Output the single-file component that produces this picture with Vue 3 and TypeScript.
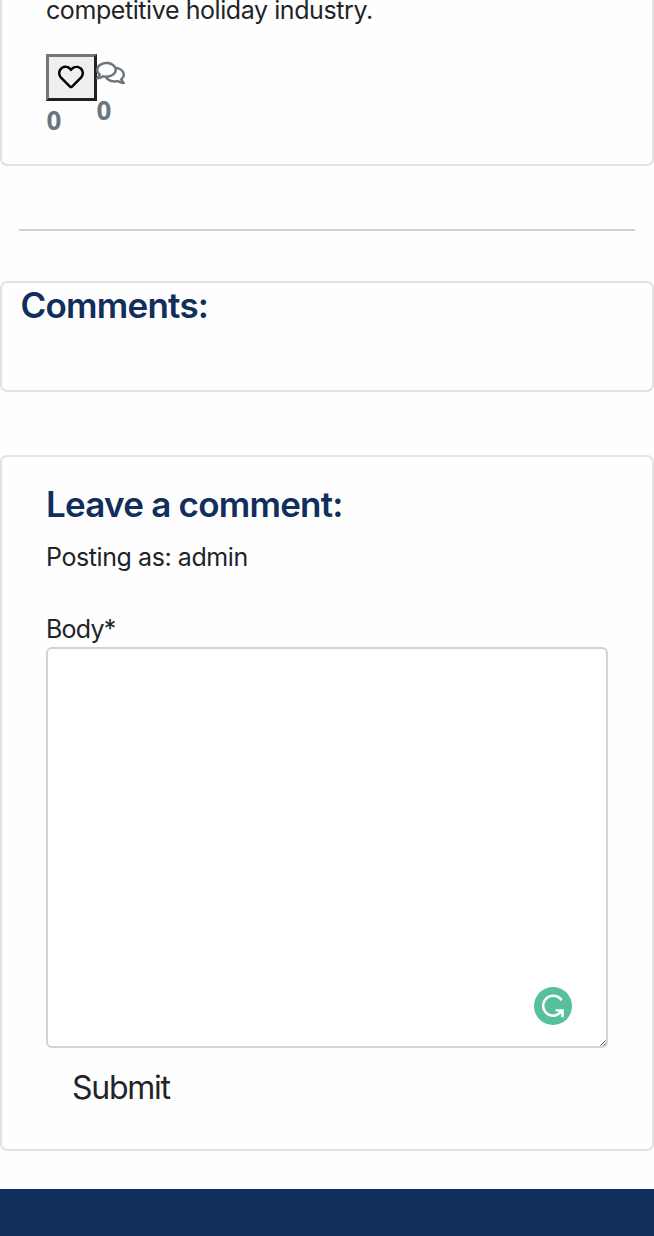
<script setup lang="ts">
import { ref } from 'vue'

const likes = ref<number>(0)
const replies = ref<number>(0)
const username = ref<string>('admin')
const body = ref<string>('')
</script>

<template>
  <main class="page">
    <section class="card post">
      <p class="excerpt">competitive holiday industry.</p>
      <div class="reactions">
        <div class="reaction">
          <button class="like" type="button" aria-label="Like">
            <svg viewBox="0 0 512 512" width="26" height="26" fill="currentColor">
              <path d="M458.4 64.3C400.6 15.7 311.3 23 256 79.3 200.7 23 111.4 15.6 53.6 64.3-21.6 127.6-10.6 230.8 43 285.5l175.4 178.7c10 10.2 23.4 15.9 37.6 15.9 14.3 0 27.6-5.6 37.6-15.8L469 285.6c53.5-54.7 64.7-157.9-10.6-221.3zm-23.6 187.5L259.4 430.5c-2.4 2.4-4.4 2.4-6.8 0L77.2 251.8c-36.5-37.2-43.9-107.6 7.3-150.7 38.9-32.7 98.9-27.8 136.5 10.5l35 35.7 35-35.7c37.8-38.5 97.8-43.2 136.5-10.6 51.1 43.1 43.5 113.9 7.3 150.8z" />
            </svg>
          </button>
          <span class="count">{{ likes }}</span>
        </div>
        <div class="reaction replies">
          <svg class="bubbles" viewBox="0 0 576 512" width="29" height="26" fill="currentColor">
            <path d="M532 386.2c27.5-27.1 44-61.1 44-98.2 0-80-76.5-146.1-176.2-157.9C368.3 72.5 294.3 32 208 32 93.1 32 0 103.6 0 192c0 37 16.5 71 44 98.2-15.3 30.7-37.3 54.5-37.7 54.9-6.3 6.7-8.1 16.5-4.4 25 3.6 8.5 12 14 21.2 14 53.5 0 96.7-20.2 125.2-38.8 9.2 2.1 18.7 3.7 28.4 4.9C208.1 407.6 281.8 448 368 448c20.8 0 40.8-2.4 59.8-6.8C456.3 459.7 499.4 480 553 480c9.2 0 17.5-5.5 21.2-14 3.6-8.5 1.9-18.3-4.4-25-.4-.3-22.5-24.1-37.8-54.8zm-392.8-92.3L122.1 305c-14.1 9.1-28.5 16.3-43.1 21.4 2.7-4.7 5.4-9.7 8-14.8l15.5-31.1L77.7 256C64.2 242.6 48 220.7 48 192c0-60.7 73.3-112 160-112s160 51.3 160 112-73.3 112-160 112c-16.5 0-33-1.9-49-5.6l-19.8-4.5zM498.3 352l-24.7 24.4 15.5 31.1c2.6 5.1 5.3 10.1 8 14.8-14.6-5.1-29-12.3-43.1-21.4l-17.1-11.1-19.9 4.6c-16 3.7-32.5 5.6-49 5.6-54 0-102.2-20.1-131.3-49.7C338 339.5 416 272.9 416 192c0-3.4-.4-6.7-.7-10C479.7 196.5 528 238.8 528 288c0 28.7-16.2 50.6-29.7 64z" />
          </svg>
          <span class="count">{{ replies }}</span>
        </div>
      </div>
    </section>

    <hr class="divider" />

    <section class="card comments">
      <h3 class="heading">Comments:</h3>
    </section>

    <section class="card compose">
      <h3 class="heading">Leave a comment:</h3>
      <p class="posting">Posting as: {{ username }}</p>
      <form @submit.prevent>
        <label class="label" for="body">Body*</label>
        <div class="field">
          <textarea id="body" v-model="body" class="textarea"></textarea>
          <svg class="assistant" viewBox="0 0 38 38" width="38" height="38">
            <circle cx="19" cy="19" r="19" fill="#57bf9c" />
            <path d="M27.6 13.2A10 10 0 1 0 19 28.7C22.4 28.7 25 27.2 27.4 24.4" fill="none" stroke="#fff" stroke-width="2.5" />
            <path d="M21.6 22.2H29.8V30.2H27.2V26.2L24.6 24.6H21.6z" fill="#fff" />
          </svg>
          <svg class="grip" viewBox="0 0 6 6" width="6" height="6">
            <path d="M.5 5.5L5.5.5M3.5 5.5L5.5 3.5" stroke="#555" stroke-width="1" />
          </svg>
        </div>
        <button class="submit" type="submit">Submit</button>
      </form>
    </section>

    <footer class="footer"></footer>
  </main>
</template>

<style>
body {
  margin: 0;
  background: #fefefe;
}
</style>

<style scoped>
.page {
  box-sizing: border-box;
  height: 1236px;
  overflow: hidden;
  display: flex;
  flex-direction: column;
  font-family: Inter, "Liberation Sans", sans-serif;
  font-size: 25px;
  color: #212529;
}
.card {
  box-sizing: border-box;
  flex: none;
  border: 2px solid #e2e2e2;
  border-radius: 7px;
  background: #fefefe;
}
.post {
  height: 166px;
  border-top: 0;
  border-radius: 0 0 7px 7px;
  padding: 0 44px;
}
.excerpt {
  margin: 0;
  height: 54px;
  line-height: 20px;
  letter-spacing: -0.42px;
  white-space: nowrap;
}
.reactions {
  display: flex;
  align-items: flex-start;
}
.reaction {
  display: flex;
  flex-direction: column;
}
.like {
  box-sizing: border-box;
  width: 51px;
  height: 47px;
  padding: 0 1px 1px 0;
  border: 3px solid;
  border-color: #767676 #212121 #212121 #767676;
  background: #efefef;
  color: #000;
  display: flex;
  align-items: center;
  justify-content: center;
}
.count {
  padding-left: 0.5px;
  line-height: 38px;
  font-family: "Open Sans", "Noto Sans", sans-serif;
  font-size: 26px;
  font-weight: 700;
  color: #6c757d;
}
.replies {
  color: #6c757d;
  margin-left: -1px;
  padding-top: 6px;
}
.bubbles {
  display: block;
  margin-left: -0.5px;
  margin-bottom: 5px;
}
.divider {
  flex: none;
  box-sizing: border-box;
  width: 616px;
  height: 2px;
  margin: 63px 19px 50px;
  border: 0;
  background: #d1d1d1;
}
.heading {
  margin: 0;
  font-weight: 600;
  color: #112e5c;
  font-size: 35px;
  line-height: 42px;
  letter-spacing: -0.77px;
  white-space: nowrap;
}
.comments {
  height: 111px;
  padding: 1px 18.5px;
}
.compose {
  height: 696px;
  margin-top: 63px;
  padding: 26px 44px 0;
}
.posting {
  margin: 0;
  padding-top: 13px;
  line-height: 38px;
  letter-spacing: -0.42px;
}
.label {
  display: block;
  margin-top: 34px;
  line-height: 38px;
  letter-spacing: -0.75px;
}
.field {
  position: relative;
  height: 401px;
  margin-top: -1px;
}
.textarea {
  box-sizing: border-box;
  display: block;
  width: 100%;
  height: 100%;
  padding: 10px 18px;
  border: 2px solid #ced4da;
  border-radius: 6px;
  background: #fff;
  font: inherit;
  color: inherit;
  resize: none;
  outline: 0;
}
.assistant {
  position: absolute;
  right: 36px;
  bottom: 23px;
}
.grip {
  position: absolute;
  right: 2px;
  bottom: 2px;
}
.submit {
  display: block;
  margin: 16px 0 0 26px;
  padding: 0;
  border: 0;
  background: none;
  font-family: inherit;
  font-size: 32px;
  line-height: 48px;
  letter-spacing: -1.25px;
  color: #212529;
}
.footer {
  flex: none;
  height: 48px;
  margin-top: 38px;
  background: #112e5c;
}
</style>
